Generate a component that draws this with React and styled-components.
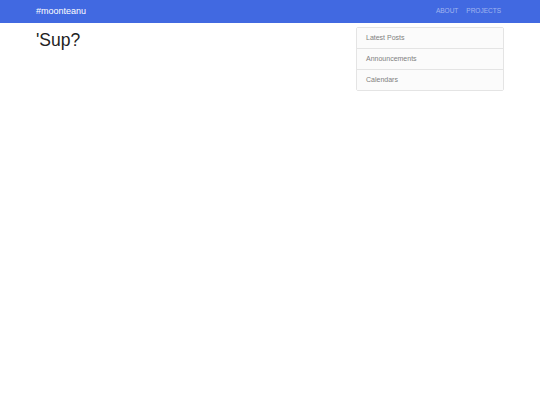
import React from "react";
import styled, { createGlobalStyle } from "styled-components";

const GlobalStyle = createGlobalStyle`
  html, body {
    margin: 0;
    padding: 0;
    background: #ffffff;
    font-family: "Liberation Sans", Arial, sans-serif;
    color: #333333;
  }
`;

// Top navbar
const Nav = styled.nav`
  background: #4169e1;
  height: 23px;
  display: flex;
  align-items: center;
`;

const NavContainer = styled.div`
  width: 100%;
  padding: 0 36px 0 36px;
  box-sizing: border-box;
  display: flex;
  align-items: center;
  justify-content: space-between;
`;

const Brand = styled.a`
  color: #ffffff;
  font-size: 9px;
  line-height: 1;
  text-decoration: none;
`;

const NavItems = styled.ul`
  display: flex;
  align-items: center;
  gap: 8px;
  list-style: none;
  margin: 0;
  padding: 0 3px 0 0;
`;

const NavItem = styled.li`
  display: flex;
  line-height: 1;
`;

const NavLink = styled.a`
  color: rgba(255, 255, 255, 0.5);
  font-size: 6.5px;
  text-transform: uppercase;
  text-decoration: none;
`;

// Page body
const Container = styled.div`
  padding: 4px 36px 0 36px;
  display: flex;
  gap: 20px;
`;

const Main = styled.main`
  flex: 1;
`;

const Title = styled.h1`
  margin: 0;
  padding-top: 2px;
  font-size: 17.5px;
  font-weight: 400;
  line-height: 22px;
  color: #222222;
`;

const ListGroup = styled.div`
  width: 148px;
  display: flex;
  flex-direction: column;
  border: 1px solid #e4e4e4;
  border-radius: 2px;
  box-sizing: border-box;
`;

const ListItem = styled.a`
  display: block;
  padding: 0 9px;
  height: 20px;
  line-height: 20px;
  font-size: 7px;
  color: #808080;
  background: #fbfbfb;
  text-decoration: none;
  border-top: ${({ $first }) => ($first ? "none" : "1px solid #e4e4e4")};
`;

const links = ["Latest Posts", "Announcements", "Calendars"];

const App = () => {
  return (
    <>
      <GlobalStyle />
      <Nav>
        <NavContainer>
          <Brand href="#">#moonteanu</Brand>
          <NavItems>
            <NavItem><NavLink href="#">About</NavLink></NavItem>
            <NavItem><NavLink href="#">Projects</NavLink></NavItem>
          </NavItems>
        </NavContainer>
      </Nav>
      <Container>
        <Main>
          <Title>'Sup?</Title>
        </Main>
        <ListGroup>
          {links.map((l, i) => (
            <ListItem key={l} href="#" $first={i === 0}>
              {l}
            </ListItem>
          ))}
        </ListGroup>
      </Container>
    </>
  );
};

export default App;
